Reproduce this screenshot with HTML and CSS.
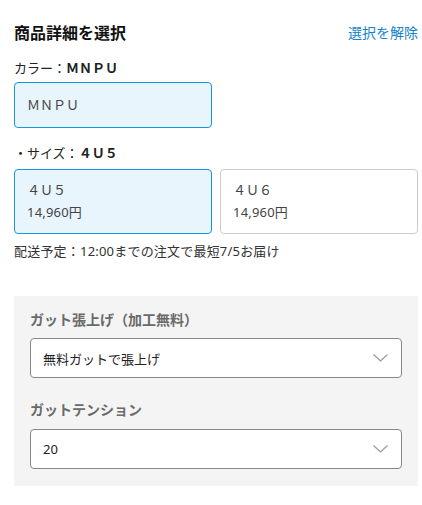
FILE: index.html
```html
<!DOCTYPE html>
<html lang="ja">

<head>
    <meta charset="UTF-8">
    <meta name="viewport" content="width=device-width, initial-scale=1">
    <title>商品詳細を選択</title>
    <link rel="stylesheet" href="styles.css">
</head>

<body>
    <div class="page">
        <div class="header">
            <h2 class="title">商品詳細を選択</h2>
            <a href="#" class="clear-link">選択を解除</a>
        </div>

        <!-- カラー -->
        <p class="option-label">カラー：<b>ＭＮＰＵ</b></p>
        <div class="option-grid">
            <div class="option-box selected">
                <span class="option-name">ＭＮＰＵ</span>
            </div>
        </div>

        <!-- サイズ -->
        <p class="option-label size-label">・サイズ：<b>４Ｕ５</b></p>
        <div class="option-grid">
            <div class="option-box tall selected">
                <span class="option-name">４Ｕ５</span>
                <span class="option-price">14,960円</span>
            </div>
            <div class="option-box tall">
                <span class="option-name">４Ｕ６</span>
                <span class="option-price">14,960円</span>
            </div>
        </div>

        <p class="delivery">配送予定：12:00までの注文で最短7/5お届け</p>

        <!-- ガット張上げ -->
        <div class="string-panel">
            <p class="panel-label">ガット張上げ（加工無料）</p>
            <div class="select-box">
                <span>無料ガットで張上げ</span>
                <svg class="chevron" width="15" height="8" viewBox="0 0 15 8">
                    <polyline points="0.5,0.5 7.5,7 14.5,0.5" fill="none" stroke="#999" stroke-width="1.2"/>
                </svg>
            </div>

            <p class="panel-label second">ガットテンション</p>
            <div class="select-box">
                <span>20</span>
                <svg class="chevron" width="15" height="8" viewBox="0 0 15 8">
                    <polyline points="0.5,0.5 7.5,7 14.5,0.5" fill="none" stroke="#999" stroke-width="1.2"/>
                </svg>
            </div>
        </div>
    </div>
</body>

</html>
```

FILE: styles.css
```css
/* Reset */
* {
    margin: 0;
    padding: 0;
    box-sizing: border-box;
}

body {
    font-family: "Noto Sans", "Noto Sans CJK JP", sans-serif;
    color: #333;
    background: #fff;
}

.page {
    padding: 20px 4px 20px 14px;
}

/* Header */
.header {
    display: flex;
    justify-content: space-between;
    align-items: center;
    height: 24px;
}

.title {
    font-size: 16px;
    font-weight: 700;
    color: #111;
}

.clear-link {
    font-size: 14px;
    color: #1383cc;
    text-decoration: none;
}

/* Option labels */
.option-label {
    margin-top: 14px;
    font-size: 13px;
    line-height: 20px;
    color: #222;
}

.option-label b {
    font-weight: 700;
}

.size-label {
    margin-top: 15px;
}

/* Option boxes */
.option-grid {
    display: grid;
    grid-template-columns: 198px 198px;
    gap: 8px;
    margin-top: 4px;
}

.size-label + .option-grid {
    margin-top: 6px;
}

.option-box {
    display: flex;
    flex-direction: column;
    border: 1px solid #ccc;
    border-radius: 4px;
    padding: 12px 12px;
    font-size: 13px;
    line-height: 20px;
    color: #444;
}

.option-box.tall {
    padding: 9px 12px 10px;
    line-height: 22px;
}

.option-box.selected {
    border-color: #1795de;
    background-color: #e9f5fd;
}

.option-price {
    letter-spacing: 0.2px;
}

.delivery {
    margin-top: 7px;
    font-size: 13px;
    line-height: 20px;
    color: #333;
    letter-spacing: 0.2px;
}

/* ガット張上げ panel */
.string-panel {
    margin-top: 35px;
    background-color: #f4f4f4;
    padding: 14px 16px 17px;
}

.panel-label {
    font-size: 14px;
    font-weight: 700;
    line-height: 20px;
    color: #6a6a6a;
}

.panel-label.second {
    margin-top: 22px;
}

.select-box {
    display: flex;
    justify-content: space-between;
    align-items: center;
    height: 40px;
    margin-top: 8px;
    padding: 0 13px 0 12px;
    background: #fff;
    border: 1px solid #888;
    border-radius: 4px;
    font-size: 13px;
    color: #222;
}

.second + .select-box {
    margin-top: 9px;
}

.chevron {
    display: block;
}
```
